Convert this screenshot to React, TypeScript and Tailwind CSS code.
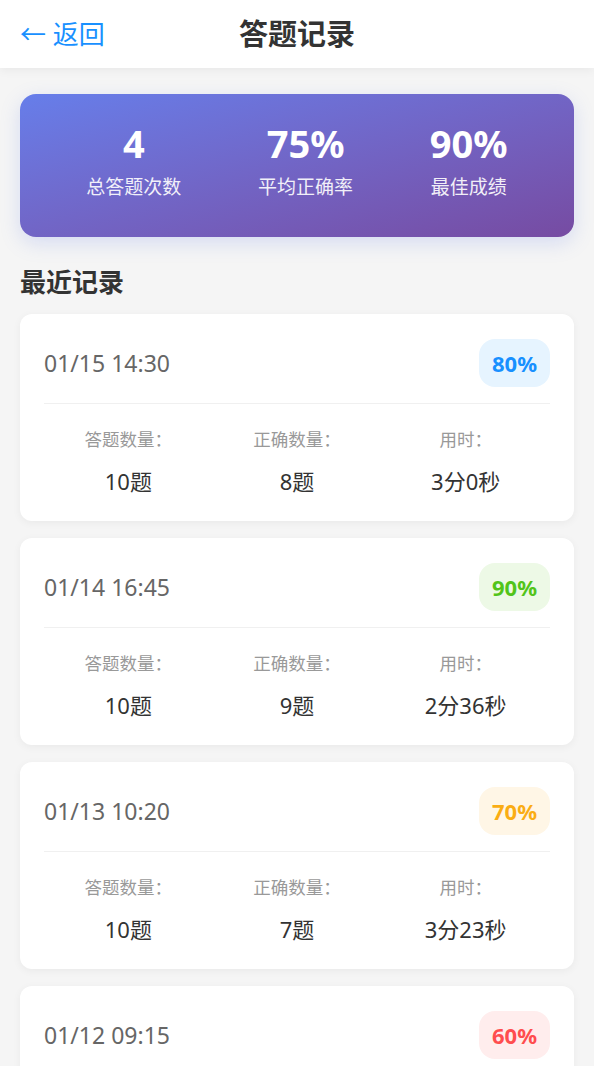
import * as React from "react";

interface RecordItem {
  time: string;
  rate: number;
  total: number;
  correct: number;
  duration: string;
}

const records: RecordItem[] = [
  { time: "01/15 14:30", rate: 80, total: 10, correct: 8, duration: "3分0秒" },
  { time: "01/14 16:45", rate: 90, total: 10, correct: 9, duration: "2分36秒" },
  { time: "01/13 10:20", rate: 70, total: 10, correct: 7, duration: "3分23秒" },
  { time: "01/12 09:15", rate: 60, total: 10, correct: 6, duration: "4分05秒" },
];

// badge colours by score
function badgeClass(rate: number) {
  if (rate >= 90) return "bg-[#edf9e6] text-[#52c41a]";
  if (rate >= 80) return "bg-[#e6f4ff] text-[#1890ff]";
  if (rate >= 70) return "bg-[#fff6e6] text-[#faad14]";
  return "bg-[#ffeded] text-[#ff4d4f]";
}

function RecordCard({ item }: { item: RecordItem }) {
  return (
    <div className="bg-white rounded-[12px] px-6 pt-[25px] pb-[25px] shadow-[0_2px_8px_rgba(0,0,0,0.05)]">
      <div className="flex justify-between items-center pb-4 border-b border-[#f0f0f0]">
        <div className="text-[23px] text-[#666]">{item.time}</div>
        <div className={"h-[48px] px-[13px] rounded-[16px] flex items-center text-[22px] font-bold " + badgeClass(item.rate)}>
          {item.rate}%
        </div>
      </div>
      <div className="grid grid-cols-3 text-center pt-[23px]">
        <div>
          <div className="text-[17.5px] leading-[24px] text-[#999]">答题数量：</div>
          <div className="mt-[15px] text-[22px] leading-[30px] text-[#333]">{item.total}题</div>
        </div>
        <div>
          <div className="text-[17.5px] leading-[24px] text-[#999]">正确数量：</div>
          <div className="mt-[15px] text-[22px] leading-[30px] text-[#333]">{item.correct}题</div>
        </div>
        <div>
          <div className="text-[17.5px] leading-[24px] text-[#999]">用时：</div>
          <div className="mt-[15px] text-[22px] leading-[30px] text-[#333]">{item.duration}</div>
        </div>
      </div>
    </div>
  );
}

export default function App() {
  return (
    <div className="min-h-screen bg-[#f5f5f5] font-['Noto_Sans','Noto_Sans_CJK_SC',sans-serif]">
      <div className="h-[68px] bg-white grid grid-cols-[1fr_auto_1fr] items-center px-5 shadow-[0_2px_10px_rgba(0,0,0,0.06)] relative z-10">
        <div className="text-[26px] text-[#1890ff] leading-none">← 返回</div>
        <div className="text-[29px] font-bold text-[#333]">答题记录</div>
        <div />
      </div>

      <div className="px-5 pt-[26px] pb-6">
        <div className="rounded-[16px] bg-gradient-to-br from-[#667eea] to-[#764ba2] pt-[28px] pb-[36px] px-7 flex justify-around shadow-[0_6px_20px_rgba(102,126,234,0.22)]">
          <div className="text-center text-white">
            <div className="text-[38px] leading-[43px] font-bold">4</div>
            <div className="mt-[9px] text-[19px] leading-[27px] opacity-90">总答题次数</div>
          </div>
          <div className="text-center text-white">
            <div className="text-[38px] leading-[43px] font-bold">75%</div>
            <div className="mt-[9px] text-[19px] leading-[27px] opacity-90">平均正确率</div>
          </div>
          <div className="text-center text-white">
            <div className="text-[38px] leading-[43px] font-bold">90%</div>
            <div className="mt-[9px] text-[19px] leading-[27px] opacity-90">最佳成绩</div>
          </div>
        </div>

        <div className="mt-[28px] mb-[14px] text-[26px] leading-[35px] font-bold text-[#333]">最近记录</div>

        <div className="flex flex-col gap-[17px]">
          {records.map((r) => (
            <RecordCard key={r.time} item={r} />
          ))}
        </div>
      </div>
    </div>
  );
}
